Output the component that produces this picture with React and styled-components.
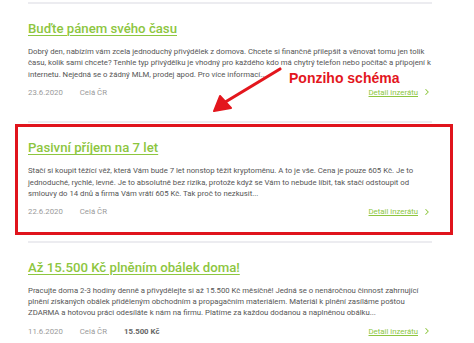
import React from 'react';
import styled, { createGlobalStyle } from 'styled-components';
import { ChevronRight } from 'lucide-react';

const GlobalStyle = createGlobalStyle`
  body {
    margin: 0;
    background: #fff;
    font-family: Roboto, "Liberation Sans", sans-serif;
  }
`;

const ads = [
  {
    title: 'Buďte pánem svého času',
    text: 'Dobrý den, nabízím vám zcela jednoduchý přivýdělek z domova. Chcete si finančně přilepšit a věnovat tomu jen tolik času, kolik sami chcete? Tenhle typ přivýdělku je vhodný pro každého kdo má chytrý telefon nebo počítač a připojení k internetu. Nejedná se o žádný MLM, prodej apod. Pro více informací...',
    date: '23.6.2020',
    place: 'Celá ČR',
  },
  {
    title: 'Pasivní příjem na 7 let',
    text: 'Stačí si koupit těžící věž, která Vám bude 7 let nonstop těžit kryptoměnu. A to je vše. Cena je pouze 605 Kč. Je to jednoduché, rychlé, levné. Je to absolutně bez rizika, protože když se Vám to nebude líbit, tak stačí odstoupit od smlouvy do 14 dnů a firma Vám vrátí 605 Kč. Tak proč to nezkusit...',
    date: '22.6.2020',
    place: 'Celá ČR',
    marked: true,
  },
  {
    title: 'Až 15.500 Kč plněním obálek doma!',
    text: 'Pracujte doma 2-3 hodiny denně a přivydělejte si až 15.500 Kč měsíčně! Jedná se o nenáročnou činnost zahrnující plnění získaných obálek přiděleným obchodním a propagačním materiálem. Materiál k plnění zasíláme poštou ZDARMA a hotovou práci odesíláte k nám na firmu. Platíme za každou dodanou a naplněnou obálku...',
    date: '11.6.2020',
    place: 'Celá ČR',
    price: '15.500 Kč',
  },
];

const App = () => {
  return (
    <Page>
      <GlobalStyle />
      <List>
        {ads.map((ad) => (
          <Card key={ad.title} $marked={ad.marked}>
            <Title href="#">{ad.title}</Title>
            <Text>{ad.text}</Text>
            <Footer>
              <Meta>{ad.date}</Meta>
              <Meta>{ad.place}</Meta>
              {ad.price && <Price>{ad.price}</Price>}
              <Detail href="#">
                Detail inzerátu
                <ChevronRight size={10} strokeWidth={2.5} />
              </Detail>
            </Footer>
          </Card>
        ))}
      </List>
      <Note>
        <svg width="80" height="50" viewBox="0 0 80 50">
          <path d="M70 3 L12 38" stroke="#e3161d" strokeWidth="3.2" strokeLinecap="round" />
          <path d="M4 45 L10 30 L21 42 Z" fill="#e3161d" stroke="#e3161d" strokeWidth="2" strokeLinejoin="round" />
        </svg>
        <NoteText>Ponziho schéma</NoteText>
      </Note>
    </Page>
  );
};

const Page = styled.div`
  position: relative;
  width: 474px;
  height: 343px;
  overflow: hidden;
  padding-top: 2px;
  box-sizing: border-box;
`;

const List = styled.div`
  display: flex;
  flex-direction: column;
  margin-left: 28px;
  width: 404px;
`;

const Card = styled.div`
  position: relative;
  border-top: 2px solid #ececf0;
  padding: 15px 0 23px;

  &::after {
    content: '';
    display: ${(p) => (p.$marked ? 'block' : 'none')};
    position: absolute;
    top: 1px;
    bottom: 6px;
    left: -13px;
    right: -21px;
    border: 3px solid #e0141c;
    pointer-events: none;
  }
`;

const Title = styled.a`
  display: block;
  font-size: 13.2px;
  font-weight: 500;
  line-height: 20px;
  color: #8dc63f;
  text-decoration: underline;
  text-decoration-thickness: 1px;
  text-underline-offset: 2px;
  margin-bottom: 7px;
`;

const Text = styled.p`
  margin: 0 0 6.5px;
  max-width: 403px;
  font-size: 7.75px;
  line-height: 11.3px;
  color: #555;
`;

const Footer = styled.div`
  display: flex;
  align-items: center;
  gap: 17px;
  height: 12px;
  font-size: 7.8px;
`;

const Meta = styled.span`
  color: #9a9a9a;
`;

const Price = styled.span`
  color: #666;
  font-weight: 700;
`;

const Detail = styled.a`
  margin-left: auto;
  display: flex;
  align-items: center;
  gap: 4px;
  color: #8dc63f;
  text-decoration: underline;

  svg {
    color: #8dc63f;
  }
`;

const Note = styled.div`
  position: absolute;
  left: 210px;
  top: 66px;
  display: flex;
  align-items: flex-start;
`;

const NoteText = styled.span`
  margin-left: -1px;
  margin-top: 5px;
  font-family: "Liberation Sans", Arial, sans-serif;
  font-weight: 700;
  font-size: 14px;
  line-height: 14px;
  color: #e3161d;
`;

export default App;
